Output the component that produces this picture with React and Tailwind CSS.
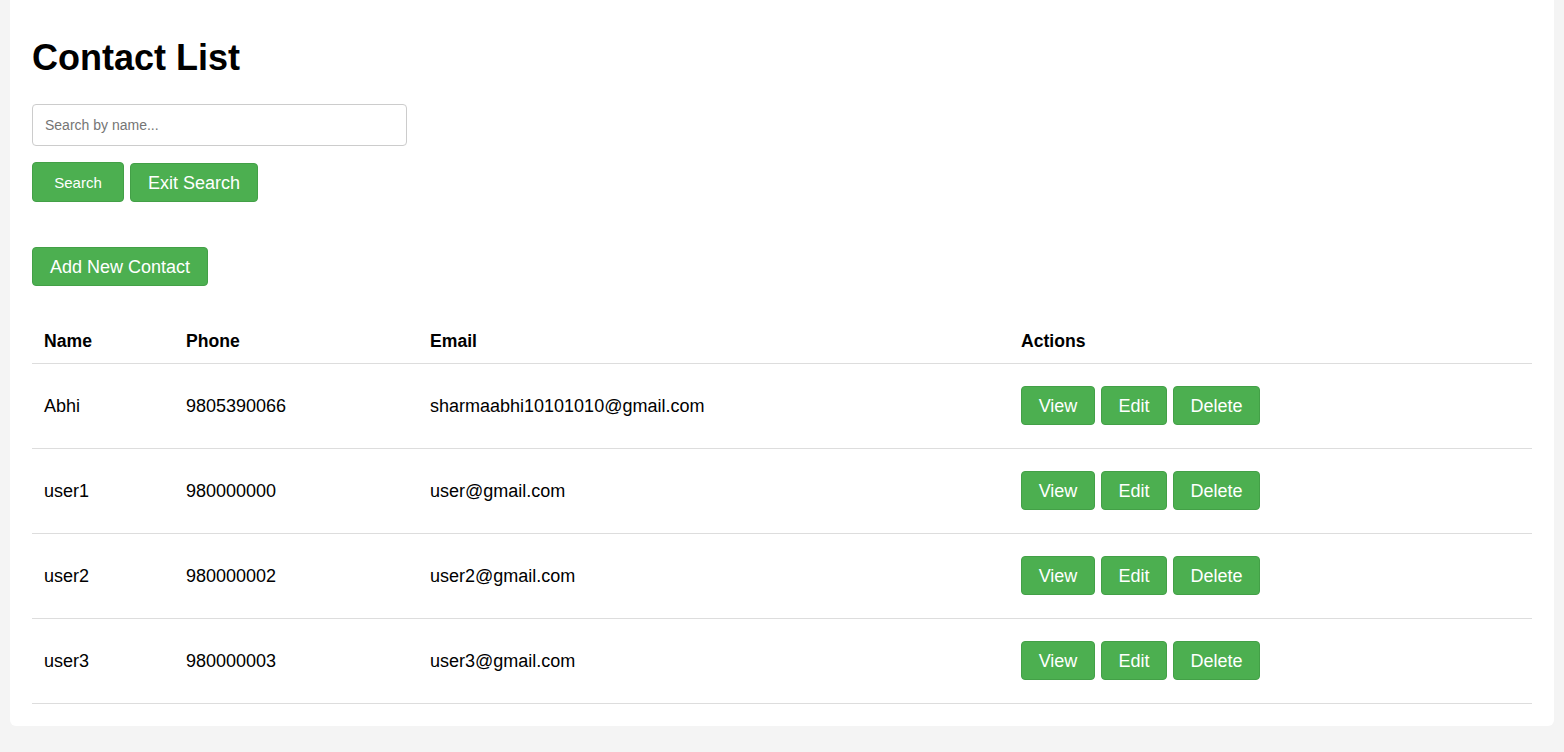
import React from "react";

const contacts = [
  { name: "Abhi", phone: "9805390066", email: "sharmaabhi10101010@gmail.com" },
  { name: "user1", phone: "980000000", email: "user@gmail.com" },
  { name: "user2", phone: "980000002", email: "user2@gmail.com" },
  { name: "user3", phone: "980000003", email: "user3@gmail.com" },
];

const base =
  "flex items-center justify-center bg-[#4CAF50] text-white border border-[#43a047] rounded-[4px] leading-none";
const btn = base + " h-[39px] text-[18px]";

export default function App() {
  return (
    <div
      className="min-h-screen bg-[#f4f4f4] px-[10px] pb-[26px] text-black"
      style={{ fontFamily: '"Liberation Sans", Arial, sans-serif' }}
    >
      <div className="bg-white rounded-b-md p-[22px]">
        <h1 className="mt-[15px] text-[36px] font-bold leading-[41px]">Contact List</h1>
        <input
          type="text"
          placeholder="Search by name..."
          className="mt-[26px] block w-[375px] h-[42px] border border-[#ccc] rounded-[4px] px-3 text-[14px] placeholder:text-[#757575] outline-none"
        />
        <div className="mt-[16px] flex items-end gap-[6px]">
          <button className={base + " h-[40px] text-[15px] w-[92px]"}>Search</button>
          <button className={btn + " w-[128px]"}>Exit Search</button>
        </div>
        <button className={btn + " w-[176px] mt-[45px]"}>Add New Contact</button>

        <div className="mt-[33px]">
          <div className="grid grid-cols-[142px_244px_591px_1fr] h-[45px] items-center border-b border-[#ddd] text-[17.6px] font-bold">
            <div className="pl-3">Name</div>
            <div className="pl-3">Phone</div>
            <div className="pl-3">Email</div>
            <div className="pl-3">Actions</div>
          </div>
          {contacts.map((c) => (
            <div
              key={c.name}
              className="grid grid-cols-[142px_244px_591px_1fr] h-[85px] items-center border-b border-[#ddd] text-[18px]"
            >
              <div className="pl-3">{c.name}</div>
              <div className="pl-3">{c.phone}</div>
              <div className="pl-3">{c.email}</div>
              <div className="pl-3 flex gap-[6px] -mt-[1px]">
                <button className={btn + " w-[74px]"}>View</button>
                <button className={btn + " w-[66px]"}>Edit</button>
                <button className={btn + " w-[87px]"}>Delete</button>
              </div>
            </div>
          ))}
        </div>
      </div>
    </div>
  );
}
